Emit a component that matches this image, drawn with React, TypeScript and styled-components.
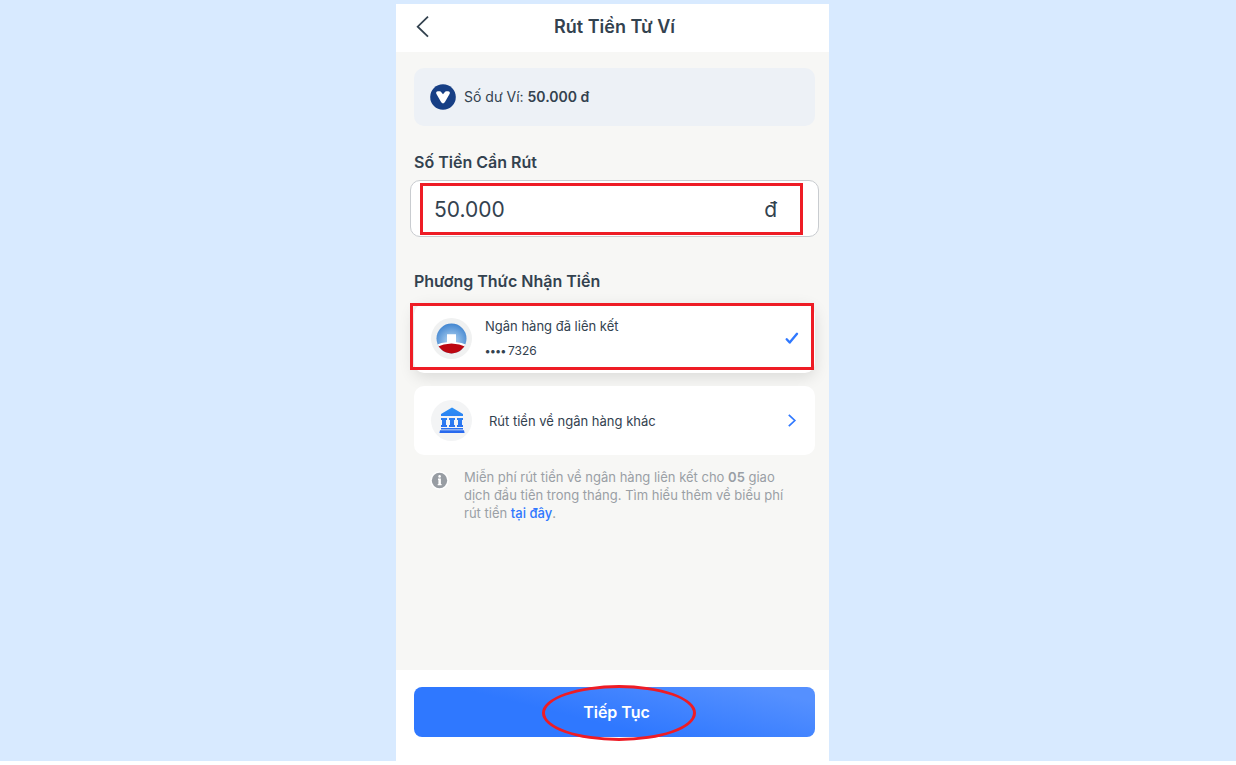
import React, { useState } from "react";
import styled, { createGlobalStyle } from "styled-components";

const ink = "#33424f";
const muted = "#9a9fa5";
const blue = "#2f78ff";
const red = "#ee1c25";

const GlobalStyle = createGlobalStyle`
  *, *::before, *::after { box-sizing: border-box; }
  body {
    margin: 0;
    background: #fff;
    color: ${ink};
    font-family: Inter, "Noto Sans", sans-serif;
  }
  button, input { font: inherit; color: inherit; }
`;

const Page = styled.div`
  min-height: 100vh;
  padding: 4px 11px 0 0;
  border-bottom: 4px solid #fff;
  display: flex;
  justify-content: center;
  background: #d8eaff;
`;

const Phone = styled.main`
  width: 100%;
  max-width: 433px;
  display: flex;
  flex-direction: column;
  background: #f7f7f5;
`;

const Header = styled.header`
  height: 48px;
  display: grid;
  grid-template-columns: 34px 1fr 32px;
  align-items: center;
  padding: 0 14px 3px 16px;
  background: #fff;
`;

const BackButton = styled.button`
  display: flex;
  padding: 0;
  border: 0;
  background: none;
`;

const Title = styled.h1`
  margin: 0;
  font-size: 18px;
  line-height: 24px;
  font-weight: 600;
  text-align: center;
`;

const Content = styled.div`
  flex: 1;
  padding: 16px 14px 16px 18px;
`;

const Balance = styled.div`
  height: 58px;
  display: flex;
  align-items: center;
  gap: 8px;
  padding: 0 16px;
  border-radius: 10px;
  background: #edf1f6;
  font-size: 14px;
  line-height: 20px;

  b { font-weight: 600; }
`;

const Label = styled.label`
  display: block;
  margin-top: 24px;
  font-size: 16px;
  line-height: 24px;
  font-weight: 600;
`;

const Heading = styled.h2`
  margin: 32px 0 11px;
  font-size: 16px;
  line-height: 24px;
  font-weight: 600;
`;

const Field = styled.div`
  margin: 6px -4px 0;
  padding: 2px 15px 1px 9px;
  border: 1px solid #c9ccd0;
  border-radius: 10px;
  background: #fff;
`;

const FieldHighlight = styled.div`
  height: 52px;
  display: flex;
  align-items: center;
  padding: 0 23px 0 11px;
  border: 3px solid ${red};
  font-size: 21px;
`;

const AmountInput = styled.input`
  flex: 1;
  min-width: 0;
  padding: 0;
  border: 0;
  outline: 0;
  background: none;
`;

const Method = styled.button<{ $selected?: boolean }>`
  position: relative;
  width: 100%;
  height: 69px;
  display: flex;
  align-items: center;
  gap: ${(p) => (p.$selected ? 13 : 17)}px;
  margin-bottom: 13px;
  padding: 0 16px;
  border: 0;
  border-radius: 10px;
  background: #fff;
  text-align: left;
  box-shadow: ${(p) => (p.$selected ? "0 4px 16px rgba(0, 0, 0, 0.12)" : "none")};
`;

const MethodHighlight = styled.span`
  position: absolute;
  inset: -1px 1px 3px -4px;
  border: 3px solid ${red};
`;

const MethodText = styled.span`
  flex: 1;
  font-size: 13px;
  line-height: 18px;
`;

const CardNumber = styled.span`
  display: flex;
  align-items: center;
  gap: 2px;
  margin-top: 7px;
  font-size: 12px;
  line-height: 18px;
`;

const Mask = styled.b`
  font-size: 11px;
`;

const Note = styled.div`
  display: flex;
  gap: 15px;
  padding: 0 16px;
  color: ${muted};
  font-size: 13px;
  line-height: 18px;

  p { margin: 0; }
  b { font-weight: 600; }
  svg { flex: none; margin-top: 3px; }
`;

const Link = styled.a`
  color: ${blue};
  font-weight: 500;
  text-decoration: none;
`;

const Footer = styled.footer`
  padding: 17px 14px 24px 18px;
  background: #fff;
`;

const Submit = styled.button`
  position: relative;
  display: block;
  width: 100%;
  height: 50px;
  border: 0;
  border-radius: 8px;
  background: linear-gradient(14deg, #2f78ff 40%, #5590ff 90%);
  color: #fff;
  font-size: 16px;
  line-height: 24px;
  font-weight: 600;
`;

const Ring = styled.span`
  position: absolute;
  inset: -2px calc(50% - 81px) -4px auto;
  width: 154px;
  border: 3px solid ${red};
  border-radius: 50%;
`;

const SubmitLabel = styled.span`
  padding-left: 4px;
`;

const BackIcon = () => (
  <svg width="22" height="24" viewBox="0 0 22 24" fill="none" aria-hidden="true">
    <path d="M16 1.700 5.700 11.700 16 21.700" stroke={ink} strokeWidth="1.8" />
  </svg>
);

const WalletIcon = () => (
  <svg width="26" height="26" viewBox="0 0 26 26" aria-hidden="true">
    <circle cx="13" cy="13" r="12.800" fill="#173f85" />
    <path d="M8 7.300h1.800q.8 0 1.300.7L13 10.200l1.900-2.200q.5-.7 1.300-.7H18q2.400.2 1.700 2.400l-4.900 8.600q-1.800 2.200-3.600 0L6.300 9.700Q5.600 7.500 8 7.300Z" fill="#fff" />
  </svg>
);

const LinkedBankIcon = () => (
  <svg width="42" height="42" viewBox="0 0 42 42" aria-hidden="true">
    <defs>
      <radialGradient id="sky" cx="50%" cy="60%" r="60%">
        <stop offset="0" stopColor="#bcdcf5" />
        <stop offset="1" stopColor="#3f83cf" />
      </radialGradient>
      <clipPath id="disc"><circle cx="21.500" cy="20.500" r="15" /></clipPath>
    </defs>
    <circle cx="21.500" cy="20.500" r="20.500" fill="#f0f1f1" />
    <g clipPath="url(#disc)">
      <rect x="6" y="5" width="31" height="31" fill="url(#sky)" />
      <path d="M5 27.300q6-2.600 12-3V16.200h9v8.100q6 .4 12 3V31H5Z" fill="#fff" />
      <path d="M5 29.600q16.500-8 33 0V37H5Z" fill="#bd0711" />
    </g>
  </svg>
);

const OtherBankIcon = () => (
  <svg width="42" height="42" viewBox="0 0 42 42" aria-hidden="true">
    <defs>
      <linearGradient id="bank" x1="0" y1="0" x2="0" y2="1">
        <stop offset="0" stopColor="#2d91f5" />
        <stop offset="1" stopColor="#2868ee" />
      </linearGradient>
    </defs>
    <circle cx="21.500" cy="20.500" r="20.500" fill="#f3f4f5" />
    <path
      fill="url(#bank)"
      d="M22 7.500 33 14v2H11V14ZM11 18h6v2h-1v5h1v2h-6v-2h1v-5h-1ZM19 18h6v2h-1v5h1v2h-6v-2h1v-5h-1ZM27 18h6v2h-1v5h1v2h-6v-2h1v-5h-1ZM11 28h22v1.500H11ZM10 30.200h24l.6 2.800H9.400Z"
    />
  </svg>
);

const CheckIcon = () => (
  <svg width="14" height="14" viewBox="0 0 14 14" fill="none" aria-hidden="true">
    <path d="m1.700 7.300 3 3.200 7.300-8.700" stroke={blue} strokeWidth="2.400" strokeLinecap="round" strokeLinejoin="round" />
  </svg>
);

const ChevronIcon = () => (
  <svg width="14" height="14" viewBox="0 0 14 14" fill="none" aria-hidden="true">
    <path d="m3.800.8 6 5.700-6 5.700" stroke={blue} strokeWidth="1.700" />
  </svg>
);

const InfoIcon = () => (
  <svg width="19" height="19" viewBox="0 0 19 19" aria-hidden="true">
    <circle cx="9.500" cy="9.500" r="9.300" fill="#fff" />
    <circle cx="9.500" cy="9.500" r="7.700" fill="#989da3" />
    <path d="M8 7.600h2.900v5.400h.7v1.300H7.700V13h.7V8.900H8Z" fill="#fff" />
    <circle cx="9.600" cy="5.400" r="1.300" fill="#fff" />
  </svg>
);

export default function App() {
  const [amount, setAmount] = useState("50.000");
  return (
    <>
      <GlobalStyle />
      <Page>
        <Phone>
          <Header>
            <BackButton type="button" aria-label="Quay lại"><BackIcon /></BackButton>
            <Title>Rút Tiền Từ Ví</Title>
          </Header>
          <Content>
            <Balance>
              <WalletIcon />
              <span>Số dư Ví: <b>50.000 đ</b></span>
            </Balance>
            <Label htmlFor="amount">Số Tiền Cần Rút</Label>
            <Field>
              <FieldHighlight>
                <AmountInput id="amount" inputMode="numeric" value={amount} onChange={(e) => setAmount(e.target.value)} />
                <span>đ</span>
              </FieldHighlight>
            </Field>
            <Heading>Phương Thức Nhận Tiền</Heading>
            <Method type="button" $selected>
              <LinkedBankIcon />
              <MethodText>
                Ngân hàng đã liên kết
                <CardNumber><Mask>••••</Mask>7326</CardNumber>
              </MethodText>
              <CheckIcon />
              <MethodHighlight />
            </Method>
            <Method type="button">
              <OtherBankIcon />
              <MethodText>Rút tiền về ngân hàng khác</MethodText>
              <ChevronIcon />
            </Method>
            <Note>
              <InfoIcon />
              <p>
                Miễn phí rút tiền về ngân hàng liên kết cho <b>05</b> giao dịch đầu tiên trong tháng. Tìm hiểu thêm về biểu phí rút tiền <Link href="#fees">tại đây</Link>.
              </p>
            </Note>
          </Content>
          <Footer>
            <Submit type="button"><SubmitLabel>Tiếp Tục</SubmitLabel><Ring /></Submit>
          </Footer>
        </Phone>
      </Page>
    </>
  );
}
